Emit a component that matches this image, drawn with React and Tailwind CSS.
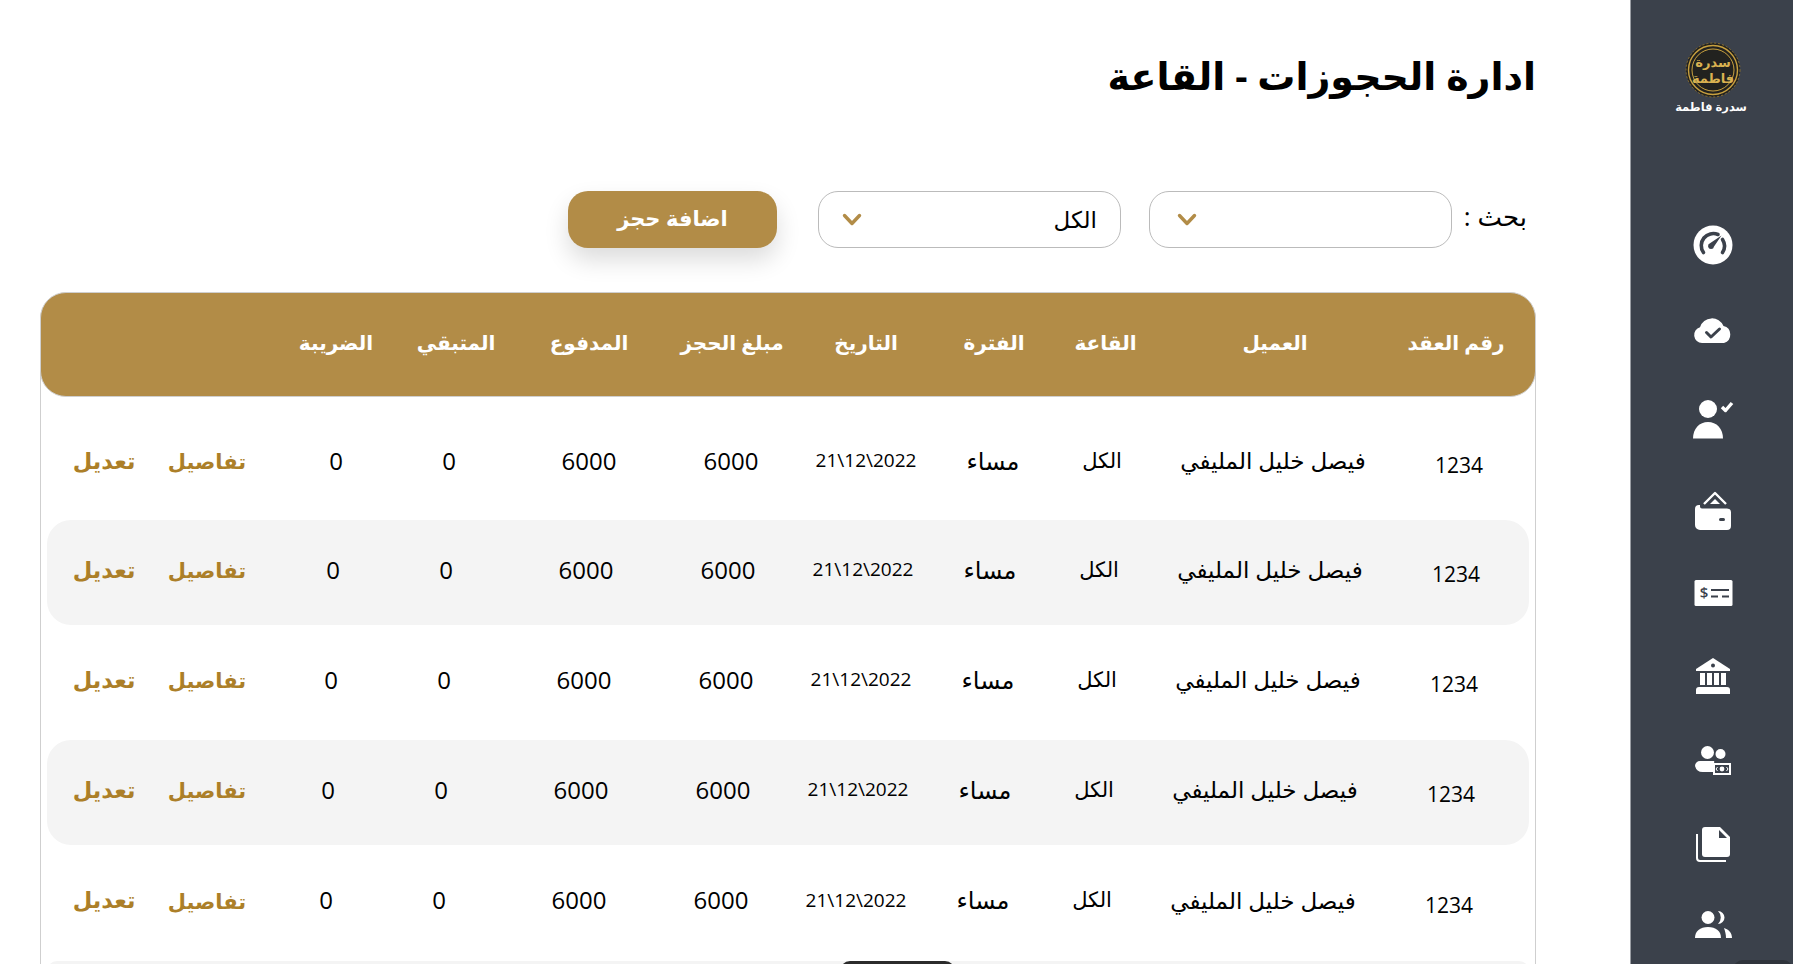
const FONT = "font-['Open_Sans','DejaVu_Sans',sans-serif]";

const headers = [
  { label: 'رقم العقد', nudge: 'pr-[6px]' },
  { label: 'العميل', nudge: 'pl-[4px]' },
  { label: 'القاعة', nudge: 'pl-[7px]' },
  { label: 'الفترة', nudge: 'pl-[2px]' },
  { label: 'التاريخ', nudge: '' },
  { label: 'مبلغ الحجز', nudge: 'pl-[2px]' },
  { label: 'المدفوع', nudge: '' },
  { label: 'المتبقي', nudge: 'pl-[14px]' },
  { label: 'الضريبة', nudge: '' },
];

// each row drifts a little to the left in the design
const rows = [
  { box: 'h-[123px] pt-[10px]', shift: 'pr-0' },
  { box: 'h-[105px] rounded-[24px] bg-[#f4f4f4]', shift: 'pr-[3px]' },
  { box: 'h-[115px]', shift: 'pr-[5px]' },
  { box: 'h-[105px] rounded-[24px] bg-[#f4f4f4]', shift: 'pr-[8px]' },
  { box: 'h-[116px]', shift: 'pr-[10px]' },
];

const TRACKS = 'grid-cols-[140px_232px_110px_108px_146px_124px_160px_120px_106px]';

function Chevron() {
  return (
    <svg width="20" height="13" viewBox="0 0 20 13" fill="none" stroke="#b28c47" strokeWidth="3.4" strokeLinecap="round" strokeLinejoin="round">
      <path d="M2.500 2.500L10 10.500l7.500-8" />
    </svg>
  );
}

function Logo() {
  return (
    <svg width="56" height="56" viewBox="0 0 56 56">
      <circle cx="28" cy="28" r="27" fill="#22221f" stroke="#8a6f30" strokeWidth="1" strokeDasharray="2 2" />
      <circle cx="28" cy="28" r="24.500" fill="none" stroke="#c9a13f" strokeWidth="1.400" />
      <circle cx="28" cy="28" r="21" fill="none" stroke="#c9a13f" strokeWidth="1" />
      <text x="28" y="25" textAnchor="middle" fontSize="13" fontWeight="700" fill="#d9b251" fontFamily="DejaVu Sans">سدرة</text>
      <text x="28" y="41" textAnchor="middle" fontSize="13" fontWeight="700" fill="#d9b251" fontFamily="DejaVu Sans">فاطمة</text>
    </svg>
  );
}

const DARK = '#3b414b';

const icons = [
  {
    mt: 'mt-[110px]',
    svg: (
      <svg width="40" height="40" viewBox="0 0 40 40">
        <circle cx="20" cy="20" r="19.500" fill="#fff" />
        <path d="M10.500 27.500A12 12 0 0 1 25 9.500" fill="none" stroke={DARK} strokeWidth="3.600" strokeLinecap="round" />
        <path d="M29.500 14.500A12 12 0 0 1 29.500 27.500" fill="none" stroke={DARK} strokeWidth="3.600" strokeLinecap="round" />
        <path d="M28.500 10.500L21 21.500a3 3 0 1 1-4-3.200z" fill={DARK} />
      </svg>
    ),
  },
  {
    mt: 'mt-[51px]',
    svg: (
      <svg width="40" height="28" viewBox="0 0 40 28">
        <path d="M9 27a8 8 0 0 1-2-15.700A12.500 12.500 0 0 1 30.500 10 8.800 8.800 0 0 1 31 27z" fill="#fff" />
        <path d="M13.500 16.500l4.500 4.500 8.500-8" fill="none" stroke={DARK} strokeWidth="3" strokeLinecap="round" strokeLinejoin="round" />
      </svg>
    ),
  },
  {
    mt: 'mt-[55px]',
    svg: (
      <svg width="42" height="40" viewBox="0 0 42 40">
        <circle cx="16" cy="10" r="9" fill="#fff" />
        <path d="M1 39.500C1 29.500 7.500 23 16 23s15 6.500 15 16.500z" fill="#fff" />
        <path d="M30 8l3.500 3.500L40 4" fill="none" stroke="#fff" strokeWidth="3.400" strokeLinejoin="round" />
      </svg>
    ),
  },
  {
    mt: 'mt-[52px]',
    svg: (
      <svg width="38" height="40" viewBox="0 0 38 40">
        <path d="M1 18a4 4 0 0 1 4-4h1v1.500a2 2 0 0 0 2 2h25a4 4 0 0 1 4 4V35a4 4 0 0 1-4 4H6a5 5 0 0 1-5-5z" fill="#fff" />
        <path d="M10 13L21 2l11 11" fill="none" stroke="#fff" strokeWidth="2.400" strokeLinejoin="round" />
        <path d="M16 13l5-5 5 5z" fill="#fff" />
        <rect x="25" y="27" width="6" height="3" rx="1.500" fill={DARK} />
      </svg>
    ),
  },
  {
    mt: 'mt-[49px]',
    svg: (
      <svg width="39" height="26" viewBox="0 0 39 26">
        <rect x="0.500" y="0" width="38" height="26" rx="1.500" fill="#fff" />
        <text x="10" y="18" textAnchor="middle" fontSize="15" fontWeight="600" fill={DARK} fontFamily="Open Sans">$</text>
        <path d="M17 10h18M17 16.500h7M28 16.500h7" stroke={DARK} strokeWidth="1.800" />
      </svg>
    ),
  },
  {
    mt: 'mt-[52px]',
    svg: (
      <svg width="34" height="36" viewBox="0 0 34 36">
        <path d="M17 0L34 11v2H0v-2z" fill="#fff" />
        <circle cx="17" cy="7.500" r="2" fill={DARK} />
        <path d="M4 15h5v12H4zM11 15h5v12h-5zM18 15h5v12h-5zM25 15h5v12h-5z" fill="#fff" />
        <path d="M3 29h28a3 3 0 0 1 3 3v4H0v-4a3 3 0 0 1 3-3z" fill="#fff" />
      </svg>
    ),
  },
  {
    mt: 'mt-[52px]',
    svg: (
      <svg width="36" height="30" viewBox="0 0 36 30">
        <circle cx="12.500" cy="6.500" r="6.500" fill="#fff" />
        <circle cx="25.500" cy="8" r="5" fill="#fff" />
        <path d="M0 20a5 5 0 0 1 5-5h14a2 2 0 0 1 0 2 2.500 2.500 0 0 0-1 2v7H8a8 8 0 0 1-8-6z" fill="#fff" />
        <rect x="18" y="17" width="18" height="12" fill="#fff" />
        <rect x="20" y="19" width="14" height="8" fill={DARK} />
        <circle cx="27" cy="23" r="2.400" fill="#fff" />
        <path d="M21 23l1.500-2M21 23l1.500 2M33 23l-1.500-2M33 23l-1.500 2" stroke="#fff" strokeWidth="1" />
      </svg>
    ),
  },
  {
    mt: 'mt-[51px]',
    svg: (
      <svg width="34" height="35" viewBox="0 0 34 35">
        <path d="M9 0h15l10 10v17a3 3 0 0 1-3 3H9a3 3 0 0 1-3-3V3a3 3 0 0 1 3-3z" fill="#fff" />
        <path d="M23 3v8h8z" fill={DARK} />
        <path d="M1 7v24a3 3 0 0 0 3 3h26" fill="none" stroke="#fff" strokeWidth="2" />
      </svg>
    ),
  },
  {
    mt: 'mt-[49px]',
    svg: (
      <svg width="37" height="27" viewBox="0 0 37 27">
        <circle cx="13" cy="6.500" r="6.500" fill="#fff" />
        <path d="M23 0a6.500 6.500 0 0 1 0 13 9 9 0 0 0 0-13z" fill="#fff" />
        <path d="M0 27c0-7 5-11 13-11s13 4 13 11z" fill="#fff" />
        <path d="M29 17c5 1.500 8 5 8 10h-6c0-4-1-7-2-10z" fill="#fff" />
      </svg>
    ),
  },
];

function TableRow({ box, shift }) {
  return (
    <div className={`mx-[6px] flex items-center text-[23px] text-black ${box}`}>
      <div className={`grid shrink-0 items-center justify-items-center pb-[6px] ${TRACKS} ${shift}`}>
        <span className="mt-[11px] text-[21px]" dir="ltr">1234</span>
        <span>فيصل خليل المليفي</span>
        <span className="text-[21px]">الكل</span>
        <span className="text-[24px]">مساء</span>
        <span className="text-[19px]" dir="ltr">21\12\2022</span>
        <span className="text-[24px]">6000</span>
        <span className="text-[24px]">6000</span>
        <span className="text-[24px]">0</span>
        <span className="text-[24px]">0</span>
      </div>
      <div className="mr-auto grid w-[180px] shrink-0 grid-cols-[100px_26px_54px] items-center justify-items-center pb-[3px] text-[21px] font-semibold text-[#ac7f28]">
        <a>تفاصيل</a>
        <span />
        <a className="pb-[3px] text-[22.500px]">تعديل</a>
      </div>
      <div className="w-[30px] shrink-0" />
    </div>
  );
}

export default function App() {
  return (
    <div dir="rtl" className={`flex h-[964px] w-full overflow-hidden bg-white ${FONT}`}>
      <aside className="relative flex w-[163px] shrink-0 flex-col items-center overflow-hidden border-l border-[#9a9da3] bg-[#3b414b] pl-[2px]">
        <div className="mt-[42px] flex h-[56px] items-center justify-center">
          <Logo />
        </div>
        <p className="mt-[1px] h-[16px] pr-[4px] text-[11.500px] leading-4 font-bold text-white">سدرة فاطمة</p>
        {icons.map((icon, i) => (
          <div key={i} className={`flex justify-center ${icon.mt}`}>
            {icon.svg}
          </div>
        ))}
        <div className="absolute right-0 -bottom-[10px] h-[14px] w-[60px] rounded-t-[10px] bg-[#2f343b]" />
      </aside>

      <main className="relative min-w-0 flex-1 pr-[94px] pl-[40px]">
        <h1 className="mt-[48px] h-[54px] text-[38px] leading-[54px] font-bold text-black">ادارة الحجوزات - القاعة</h1>

        <div className="mt-[89px] flex h-[57px] items-center">
          <label className="w-[84px] pr-[9px] pb-[6px] text-[26px] text-black">بحث :</label>
          <div className="flex h-[57px] w-[303px] items-center justify-end rounded-[20px] border border-[#bbbbbb] pl-[27px]">
            <Chevron />
          </div>
          <div className="mr-[28px] flex h-[57px] w-[303px] items-center justify-between rounded-[20px] border border-[#bbbbbb] pr-[23px] pl-[23px] text-[23px] text-black">
            <span>الكل</span>
            <Chevron />
          </div>
          <button className="mr-[41px] h-[57px] w-[209px] rounded-[20px] bg-[#b28c47] pb-[2px] text-[21px] font-bold text-white shadow-[0_12px_24px_rgba(0,0,0,0.14)]">
            اضافة حجز
          </button>
        </div>

        <div className="mt-[44px] rounded-t-[28px] border-x border-[#cfcfcf]">
          <div className="-mx-px flex h-[105px] items-center rounded-[26px] border border-[#cfcfcf] bg-[#b28c47] pr-[6px] text-[20px] font-bold text-white">
            <div className={`grid justify-items-center ${TRACKS} pb-[4px]`}>
              {headers.map(h => (
                <span key={h.label} className={h.nudge}>{h.label}</span>
              ))}
            </div>
          </div>
          {rows.map((row, i) => (
            <TableRow key={i} box={row.box} shift={row.shift} />
          ))}
          <div className="relative mx-[6px] h-[10px] rounded-t-[20px] bg-[#f4f4f4]">
            <div className="absolute top-0 left-[793px] h-[10px] w-[115px] rounded-t-[12px] bg-[#2b2b2b]" />
          </div>
        </div>
      </main>
    </div>
  );
}
